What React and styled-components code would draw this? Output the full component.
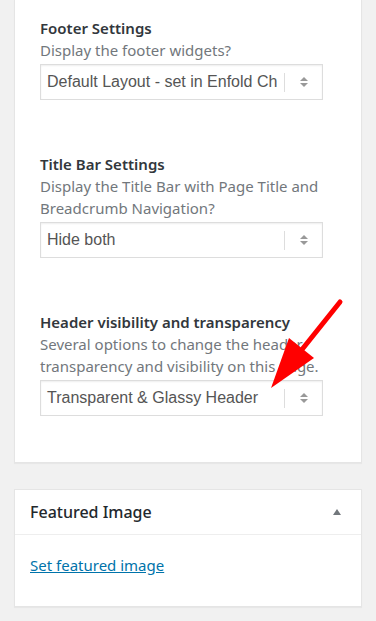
import React from "react";
import styled, { createGlobalStyle } from "styled-components";

const GlobalStyle = createGlobalStyle`
  body {
    margin: 0;
    background: #f1f1f1;
    font-family: "Noto Sans", "Open Sans", sans-serif;
  }
`;

const Page = styled.div`
  position: relative;
  width: 376px;
  height: 621px;
  padding: 0 14px;
  box-sizing: border-box;
  overflow: hidden;
`;

const Panel = styled.div`
  background: #fff;
  border: 1px solid #e5e5e5;
  border-top: ${(p) => (p.$cut ? "none" : "1px solid #e5e5e5")};
  box-shadow: 0 1px 1px rgba(0, 0, 0, 0.04);
  margin-top: ${(p) => p.$gap || 0}px;
`;

const Settings = styled.div`
  padding: 17px 0 46px 25px;
  display: flex;
  flex-direction: column;
  gap: 53px;
`;

const Section = styled.div`
  width: 286px;
  display: flex;
  flex-direction: column;
`;

const Title = styled.div`
  font-size: 15px;
  font-weight: 600;
  line-height: 22px;
  color: #32373c;
`;

const Desc = styled.div`
  font-size: 15px;
  line-height: 22px;
  color: #72777c;
`;

const Select = styled.div`
  margin-top: 3px;
  width: 283px;
  height: 36px;
  box-sizing: border-box;
  border: 1px solid #ddd;
  box-shadow: inset 0 1px 2px rgba(0, 0, 0, 0.07);
  display: flex;
  align-items: center;
`;

const Value = styled.div`
  flex: 1;
  overflow: hidden;
  white-space: nowrap;
  margin-right: 7px;
  padding-left: 6px;
  font-family: "Liberation Sans", Arial, sans-serif;
  font-size: 16px;
  color: #555;
`;

const Divider = styled.div`
  width: 1px;
  height: 19px;
  background: #ddd;
`;

const Arrows = styled.div`
  width: 37px;
  display: flex;
  flex-direction: column;
  align-items: center;
  gap: 2px;
`;

const Tri = styled.div`
  width: 0;
  height: 0;
  border-left: 4px solid transparent;
  border-right: 4px solid transparent;
  ${(p) =>
    p.$down ? "border-top: 4px solid #999;" : "border-bottom: 4px solid #999;"}
`;

const BoxHeader = styled.div`
  height: 44px;
  padding: 0 15px;
  display: flex;
  align-items: center;
  justify-content: space-between;
  border-bottom: 1px solid #eee;
`;

const BoxTitle = styled.div`
  font-size: 16px;
  font-weight: 500;
  color: #23282d;
`;

const Toggle = styled.div`
  width: 0;
  height: 0;
  margin-right: 5px;
  border-left: 4px solid transparent;
  border-right: 4px solid transparent;
  border-bottom: 6px solid #72777c;
`;

const BoxBody = styled.div`
  padding: 19px 15px 30px;
`;

const Link = styled.a`
  font-size: 15px;
  line-height: 22px;
  color: #0073aa;
  text-decoration: underline;
`;

const Pointer = styled.svg`
  position: absolute;
  left: 0;
  top: 0;
  pointer-events: none;
`;

function SelectBox({ value }) {
  return (
    <Select>
      <Value>{value}</Value>
      <Divider />
      <Arrows>
        <Tri />
        <Tri $down />
      </Arrows>
    </Select>
  );
}

const settings = [
  {
    title: "Footer Settings",
    desc: "Display the footer widgets?",
    value: "Default Layout - set in Enfold Child",
  },
  {
    title: "Title Bar Settings",
    desc: "Display the Title Bar with Page Title and Breadcrumb Navigation?",
    value: "Hide both",
  },
  {
    title: "Header visibility and transparency",
    desc: "Several options to change the header transparency and visibility on this page.",
    value: "Transparent & Glassy Header",
  },
];

export default function App() {
  return (
    <Page>
      <GlobalStyle />
      <Panel $cut>
        <Settings>
          {settings.map((s) => (
            <Section key={s.title}>
              <Title>{s.title}</Title>
              <Desc>{s.desc}</Desc>
              <SelectBox value={s.value} />
            </Section>
          ))}
        </Settings>
      </Panel>
      <Panel $gap={26}>
        <BoxHeader>
          <BoxTitle>Featured Image</BoxTitle>
          <Toggle />
        </BoxHeader>
        <BoxBody>
          <Link href="#">Set featured image</Link>
        </BoxBody>
      </Panel>
      <Pointer width="376" height="621">
        <line x1="340" y1="302" x2="300" y2="352" stroke="#f00" strokeWidth="5" strokeLinecap="round" />
        <polygon points="271,388 289,338 314,358" fill="#f00" />
      </Pointer>
    </Page>
  );
}
